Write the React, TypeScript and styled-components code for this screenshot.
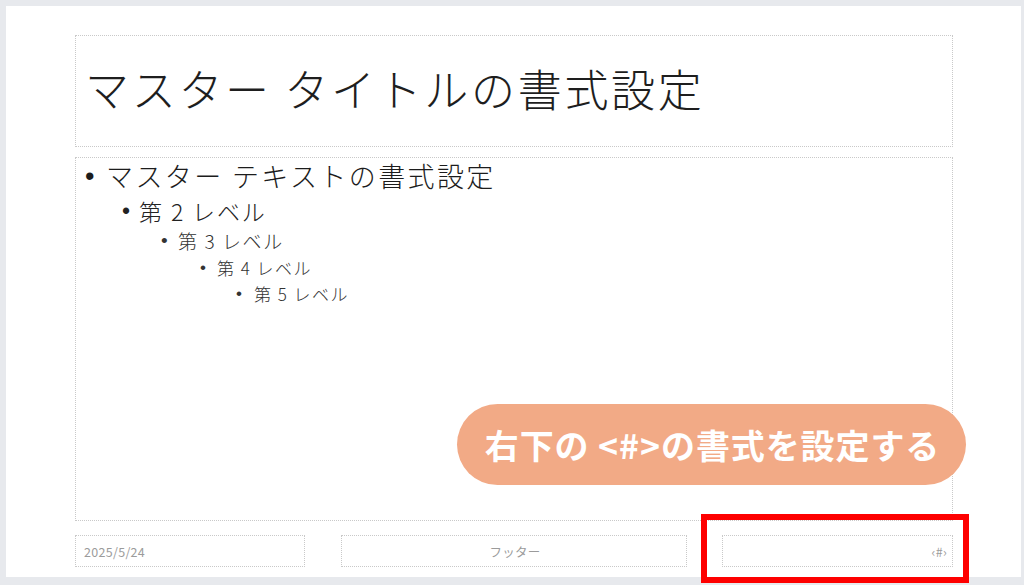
import React from "react";
import styled, { createGlobalStyle } from "styled-components";

const Global = createGlobalStyle`
  html, body { margin: 0; padding: 0; }
  body {
    width: 1024px;
    height: 585px;
    overflow: hidden;
    background: #e7e9ed;
    font-family: "Noto Sans CJK JP", "Noto Sans", sans-serif;
  }
`;

const Page = styled.div`
  position: relative;
  width: 1024px;
  height: 585px;
  padding: 6px 3px 8px 6px;
  box-sizing: border-box;
`;

const Slide = styled.div`
  background: #ffffff;
  height: 100%;
  box-sizing: border-box;
  padding: 29px 68px 10px 69px;
  display: flex;
  flex-direction: column;
`;

const Placeholder = styled.div`
  border: 1px dotted #c9c9c9;
  box-sizing: border-box;
`;

const TitleBox = styled(Placeholder)`
  height: 112px;
  display: flex;
  align-items: center;
  padding: 0 0 6px 9px;
`;

const Title = styled.h1`
  margin: 0;
  font-weight: 300;
  font-size: 44px;
  letter-spacing: 2.7px;
  color: #1e1e1e;
`;

const BodyBox = styled(Placeholder)`
  margin-top: 10px;
  height: 364px;
`;

const List = styled.ul`
  list-style: none;
  margin: 0;
  padding: 0;
`;

const levels = [
  { size: 27, indent: 9, bullet: 21, lh: 36, color: "#1c1c1c", ls: 2.4 },
  { size: 23, indent: 46, bullet: 17, lh: 34, color: "#222222", ls: 1.9 },
  { size: 19, indent: 85, bullet: 17, lh: 26, color: "#333333", ls: 1.6 },
  { size: 17, indent: 124, bullet: 17, lh: 28, color: "#333333", ls: 1.5 },
  { size: 17, indent: 160, bullet: 18, lh: 24, color: "#333333", ls: 1.5 },
];

const Item = styled.li<{ $lv: number }>`
  display: flex;
  align-items: center;
  padding-left: ${(p) => levels[p.$lv].indent}px;
  font-size: ${(p) => levels[p.$lv].size}px;
  line-height: ${(p) => levels[p.$lv].lh}px;
  letter-spacing: ${(p) => levels[p.$lv].ls}px;
  color: ${(p) => levels[p.$lv].color};
  font-weight: 300;
`;

const Bullet = styled.span<{ $lv: number }>`
  width: ${(p) => levels[p.$lv].bullet}px;
  flex: none;
  font-family: "Liberation Sans", Arial, sans-serif;
  font-size: ${(p) => levels[p.$lv].size}px;
`;

const Footer = styled.div`
  margin-top: 14px;
  height: 32px;
  display: grid;
  grid-template-columns: 230px 1fr 231px;
  column-gap: 35.5px;
`;

const FooterBox = styled(Placeholder)<{ $align: "left" | "center" | "right" }>`
  display: flex;
  align-items: center;
  justify-content: ${(p) =>
    p.$align === "left" ? "flex-start" : p.$align === "center" ? "center" : "flex-end"};
  padding: 0 5px 0 8px;
  font-size: 12.5px;
  color: #9b9b9b;
  letter-spacing: 0.3px;
`;

const Callout = styled.div`
  position: absolute;
  left: 457px;
  top: 404px;
  width: 509px;
  height: 81px;
  border-radius: 41px;
  background: #f2aa86;
  color: #ffffff;
  display: flex;
  align-items: center;
  justify-content: center;
  padding-left: 2px;
  box-sizing: border-box;
  font-size: 34px;
  font-weight: 700;
  letter-spacing: 0.9px;
`;

const Highlight = styled.div`
  position: absolute;
  left: 701px;
  top: 514px;
  width: 268px;
  height: 69px;
  border: 6px solid #fe0000;
  box-sizing: border-box;
`;

const items = [
  "マスター テキストの書式設定",
  "第 2 レベル",
  "第 3 レベル",
  "第 4 レベル",
  "第 5 レベル",
];

export default function App() {
  return (
    <>
      <Global />
      <Page>
        <Slide>
          <TitleBox>
            <Title>マスター タイトルの書式設定</Title>
          </TitleBox>
          <BodyBox>
            <List>
              {items.map((t, i) => (
                <Item key={i} $lv={i}>
                  <Bullet $lv={i}>•</Bullet>
                  <span>{t}</span>
                </Item>
              ))}
            </List>
          </BodyBox>
          <Footer>
            <FooterBox $align="left">2025/5/24</FooterBox>
            <FooterBox $align="center">フッター</FooterBox>
            <FooterBox $align="right">‹#›</FooterBox>
          </Footer>
        </Slide>
        <Callout>右下の &lt;#&gt;の書式を設定する</Callout>
        <Highlight />
      </Page>
    </>
  );
}
